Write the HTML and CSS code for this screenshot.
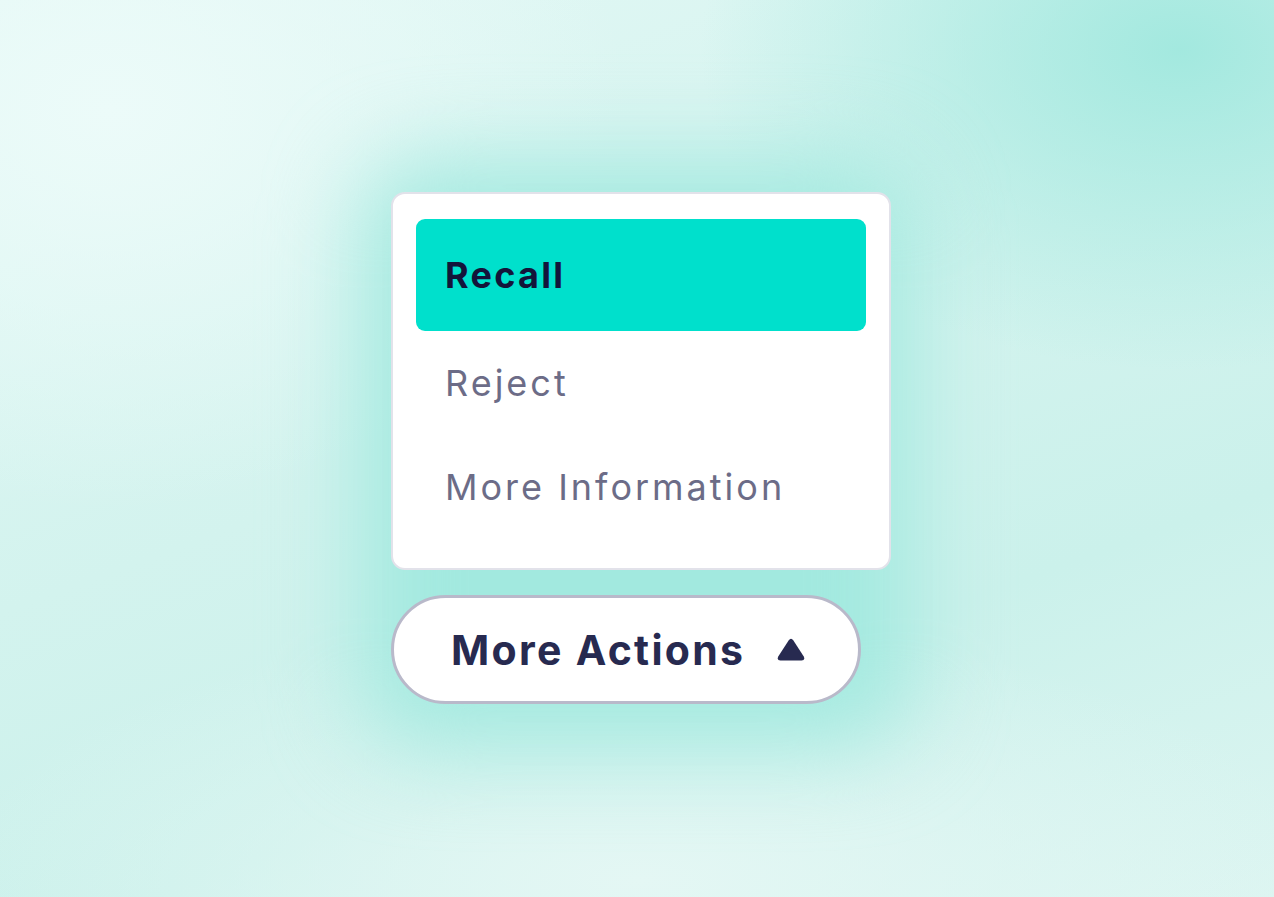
FILE: index.html
```html
<!DOCTYPE html>
<html lang="en">
<head>
<meta charset="utf-8">
<title>More Actions</title>
<link rel="stylesheet" href="styles.css">
</head>
<body>
<main class="stage">
  <div class="widget">
    <ul class="menu">
      <li class="item item-active">Recall</li>
      <li class="item">Reject</li>
      <li class="item">More Information</li>
    </ul>
    <button class="toggle" type="button">
      <span class="toggle-label">More Actions</span>
      <svg class="caret" width="28" height="23" viewBox="0 0 28 23" aria-hidden="true">
        <path d="M11.6 2.4 Q14 -0.9 16.4 2.4 L26.6 18.2 Q28.6 22 24.6 22.6 H3.4 Q-0.6 22 1.4 18.2 Z" fill="#272a50"/>
      </svg>
    </button>
  </div>
</main>
</body>
</html>
```

FILE: styles.css
```css
* { box-sizing: border-box; }

html, body {
  margin: 0;
  padding: 0;
  width: 1274px;
  height: 897px;
  overflow: hidden;
}

body {
  font-family: Inter, "Noto Sans", sans-serif;
  background:
    radial-gradient(ellipse 480px 320px at 1180px 50px, rgba(160, 232, 222, 0.95), rgba(160, 232, 222, 0) 100%),
    radial-gradient(ellipse 520px 400px at 110px 110px, rgba(236, 251, 249, 1), rgba(236, 251, 249, 0) 100%),
    radial-gradient(ellipse 700px 260px at 640px 880px, rgba(228, 247, 244, 1), rgba(228, 247, 244, 0) 100%),
    linear-gradient(160deg, #e3f8f5 0%, #d3f3ee 45%, #cbf1eb 70%, #dcf5f1 100%);
}

.stage {
  width: 1274px;
  height: 897px;
  padding: 192px 0 0 391px;
}

.widget {
  position: relative;
  width: 500px;
  display: flex;
  flex-direction: column;
  gap: 25px;
}

.widget::before {
  content: "";
  position: absolute;
  left: -30px;
  right: -20px;
  top: -30px;
  bottom: -40px;
  background: #a2e9df;
  border-radius: 60px;
  filter: blur(45px);
  z-index: -1;
}

.menu {
  list-style: none;
  margin: 0;
  width: 500px;
  height: 378px;
  padding: 25px 23px 29px;
  background: #ffffff;
  border: 2px solid #e2e2ea;
  border-radius: 14px;
  display: flex;
  flex-direction: column;
}

.item {
  height: 104px;
  display: flex;
  align-items: center;
  padding-left: 29px;
  font-size: 36px;
  font-weight: 400;
  color: #6c6c87;
  letter-spacing: 3px;
}

.item-active {
  height: 112px;
  flex: none;
  background: #00e0cc;
  border-radius: 9px;
  font-weight: 700;
  color: #13143a;
  letter-spacing: 2.3px;
}

.toggle {
  width: 470px;
  height: 109px;
  margin: 0;
  padding: 0 53px 0 57px;
  background: #ffffff;
  border: 3px solid #b9b9ca;
  border-radius: 55px;
  display: flex;
  align-items: center;
  justify-content: space-between;
  font-family: Inter, "Noto Sans", sans-serif;
  cursor: pointer;
}

.toggle-label {
  font-size: 41px;
  font-weight: 700;
  color: #272a50;
  letter-spacing: 2.3px;
}

.caret {
  display: block;
}
```
